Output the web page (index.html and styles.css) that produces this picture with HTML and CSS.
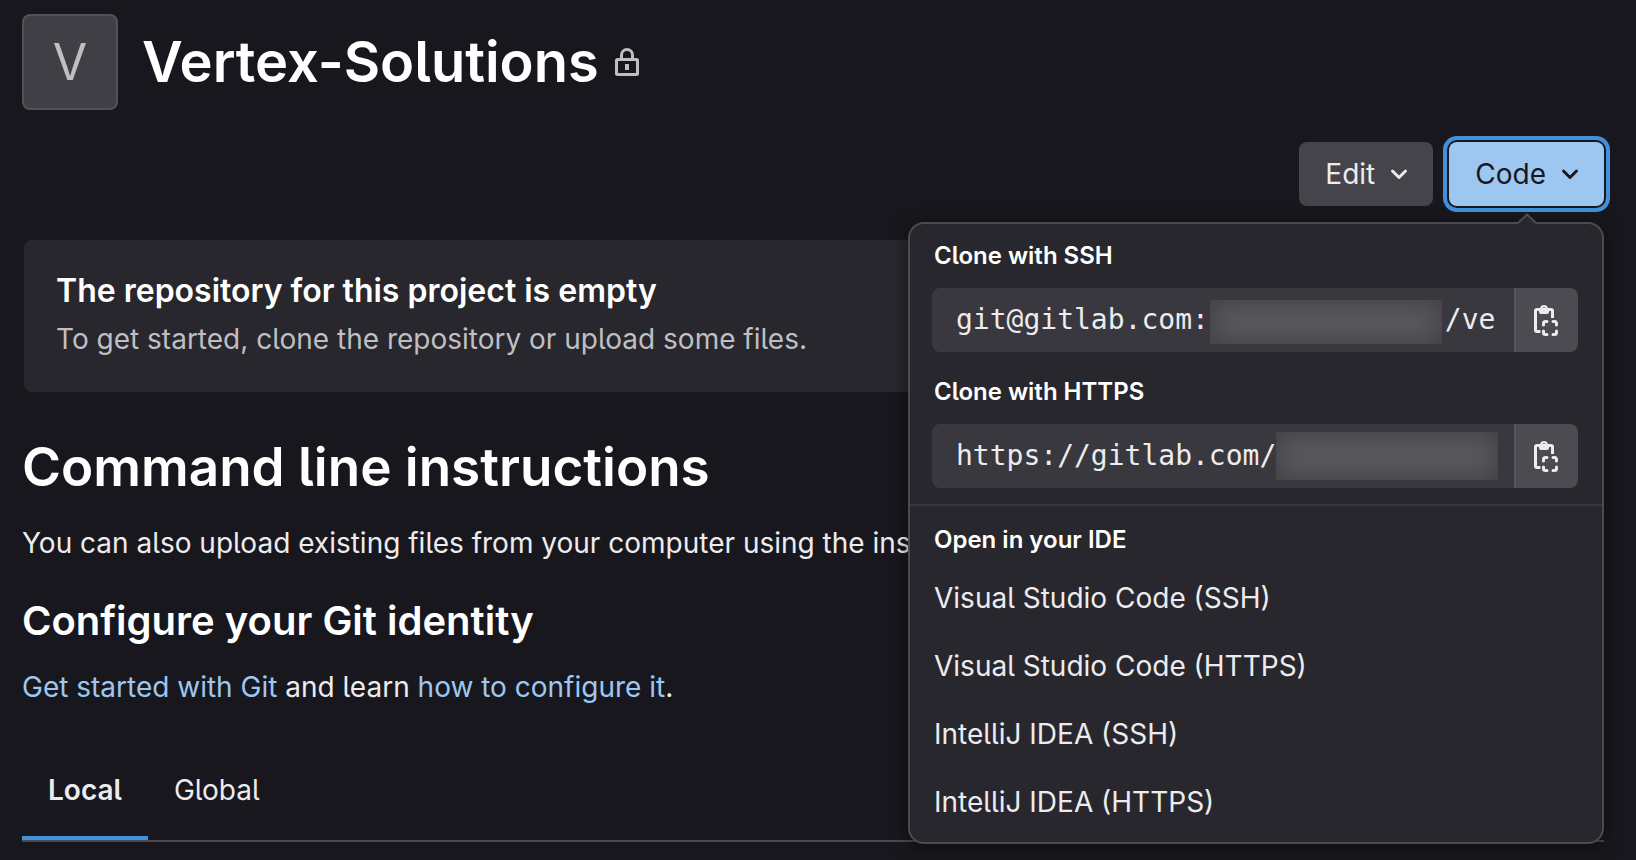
FILE: index.html
```html
<!DOCTYPE html>
<html lang="en">
<head>
<meta charset="utf-8">
<title>Vertex-Solutions</title>
<link rel="stylesheet" href="styles.css">
</head>
<body>
<svg class="sprite" aria-hidden="true">
  <symbol id="chevron" viewBox="0 0 20 20"><path d="M3.500 7 10 13.500 16.500 7" fill="none" stroke="currentColor" stroke-width="3" stroke-linecap="round" stroke-linejoin="round"/></symbol>
  <symbol id="copy" viewBox="0 0 24 32">
    <path d="M6.500 27.500H3A1.500 1.500 0 0 1 1.500 26V7A1.500 1.500 0 0 1 3 5.500h14A1.500 1.500 0 0 1 18.500 7v7" fill="none" stroke="currentColor" stroke-width="3"/>
    <path fill="currentColor" fill-rule="evenodd" d="M5 4h1a4.200 4.200 0 0 1 8 0h1v4a2 2 0 0 1-2 2H7a2 2 0 0 1-2-2zm5 3.200a2 2 0 1 0 0-4 2 2 0 0 0 0 4z"/>
    <path d="M9.500 21V19.500a2 2 0 0 1 2-2H13M19 17.500h1.500a2 2 0 0 1 2 2V21M22.500 27v1.500a2 2 0 0 1-2 2H19M13 30.500h-1.500a2 2 0 0 1-2-2V27" fill="none" stroke="currentColor" stroke-width="3" stroke-linecap="round"/>
  </symbol>
</svg>
<main class="page">
  <header class="project">
    <div class="avatar" aria-hidden="true">V</div>
    <h1 class="title">Vertex-Solutions</h1>
    <svg class="lock" viewBox="0 0 24 28" role="img" aria-label="Private"><path d="M6.500 11V7a5.500 5.500 0 0 1 11 0v4" fill="none" stroke="currentColor" stroke-width="3"/><rect x="1.500" y="11.500" width="21" height="15" rx="1" fill="none" stroke="currentColor" stroke-width="3"/><path d="M10 16h4v6h-4z" fill="currentColor"/></svg>
  </header>

  <div class="actions">
    <button class="btn" type="button">Edit <svg class="chevron"><use href="#chevron"/></svg></button>
    <div class="dropdown">
      <button class="btn btn-code" type="button" aria-expanded="true">Code <svg class="chevron"><use href="#chevron"/></svg></button>
      <div class="panel">
        <svg class="arrow" viewBox="0 0 20 12"><path class="arrow-fill" d="M0 12 10 1.500 20 12z"/><path class="arrow-line" d="M1 10 10 1.500 19 10"/></svg>
        <div class="clone">
          <label class="label" for="ssh">Clone with SSH</label>
          <div class="field">
            <input class="url" id="ssh" type="text" readonly value="git@gitlab.com:&nbsp;&nbsp;&nbsp;&nbsp;&nbsp;&nbsp;&nbsp;&nbsp;&nbsp;&nbsp;&nbsp;&nbsp;&nbsp;&nbsp;/ve">
            <span class="redacted redacted-ssh"></span>
            <button class="copy" type="button" aria-label="Copy SSH URL"><svg class="copy-icon"><use href="#copy"/></svg></button>
          </div>
          <label class="label" for="https">Clone with HTTPS</label>
          <div class="field">
            <input class="url" id="https" type="text" readonly value="https://gitlab.com/">
            <span class="redacted redacted-https"></span>
            <button class="copy" type="button" aria-label="Copy HTTPS URL"><svg class="copy-icon"><use href="#copy"/></svg></button>
          </div>
        </div>
        <div class="ide">
          <h2 class="label">Open in your IDE</h2>
          <a class="item" href="#">Visual Studio Code (SSH)</a>
          <a class="item" href="#">Visual Studio Code (HTTPS)</a>
          <a class="item" href="#">IntelliJ IDEA (SSH)</a>
          <a class="item" href="#">IntelliJ IDEA (HTTPS)</a>
        </div>
      </div>
    </div>
  </div>

  <section class="banner">
    <h2 class="banner-title">The repository for this project is empty</h2>
    <p class="banner-text">To get started, clone the repository or upload some files.</p>
  </section>

  <h2 class="heading">Command line instructions</h2>
  <p class="text">You can also upload existing files from your computer using the instructions below.</p>
  <h3 class="subheading">Configure your Git identity</h3>
  <p class="text"><a class="link" href="#">Get started with Git</a> and learn <a class="link" href="#">how to configure it</a>.</p>

  <div class="tabs" role="tablist">
    <button class="tab tab-active" type="button" role="tab" aria-selected="true">Local</button>
    <button class="tab" type="button" role="tab" aria-selected="false">Global</button>
  </div>
</main>
</body>
</html>
```
FILE: styles.css
```css
* { box-sizing: border-box; }

body {
  margin: 0;
  background: #18171d;
  color: #ececef;
  font: 400 28px/40px Inter, "Liberation Sans", sans-serif;
  font-feature-settings: "cv05";
}

h1, h2, h3, p { margin: 0; }
button, input { font: inherit; font-feature-settings: inherit; color: inherit; border: 0; margin: 0; }
a { color: inherit; text-decoration: none; }
.sprite { display: none; }

.page { padding: 14px 32px 16px 22px; }

.project { display: flex; align-items: center; }
.avatar {
  width: 96px;
  height: 96px;
  display: grid;
  place-items: center;
  background: #413f46;
  border: 2px solid #525157;
  border-radius: 8px;
  color: #bfbfc3;
  font-size: 50px;
}
.title { margin-left: 24px; font-size: 56px; line-height: 72px; font-weight: 600; color: #fff; }
.lock { width: 24px; height: 28px; margin-left: 16px; color: #bfbfc3; }

.actions { display: flex; justify-content: flex-end; gap: 16px; margin-top: 32px; }
.dropdown { position: relative; }
.btn {
  display: flex;
  align-items: center;
  gap: 14px;
  height: 64px;
  padding: 0 24px 0 26px;
  border-radius: 8px;
  background: #45444a;
}
.btn-code {
  background: #9dc7f1;
  color: #18171d;
  box-shadow: 0 0 0 2px #18171d, 0 0 0 6px #428fdc;
}
.chevron { width: 20px; height: 20px; }

.panel {
  position: absolute;
  z-index: 1;
  top: calc(100% + 16px);
  right: 0;
  width: 696px;
  background: #28272d;
  border: 2px solid #4c4b51;
  border-radius: 16px;
  box-shadow: 0 4px 16px rgba(5, 5, 6, 0.5);
}
.arrow { position: absolute; top: -11px; right: 65px; width: 20px; height: 12px; }
.arrow-fill { fill: #28272d; }
.arrow-line { fill: none; stroke: #4c4b51; stroke-width: 2; }

.clone { padding: 12px 24px 16px 22px; border-bottom: 2px solid #3a383f; }
.label {
  display: block;
  margin-left: 2px;
  font-size: 24px;
  line-height: 40px;
  font-weight: 600;
  color: #fff;
}
.field { position: relative; display: flex; height: 64px; margin-top: 12px; }
.field + .label { margin-top: 20px; }
.url {
  flex: 1;
  min-width: 0;
  padding: 0 16px 0 24px;
  border-radius: 8px 0 0 8px;
  background: #3a383f;
  font-family: "DejaVu Sans Mono", monospace;
}
.copy {
  width: 64px;
  display: grid;
  place-items: center;
  padding: 0 2px 0 0;
  background: #4c4b51;
  border-left: 2px solid #57565c;
  border-radius: 0 8px 8px 0;
}
.copy-icon { width: 24px; height: 32px; }

/* Hidden part of the address */
.redacted { position: absolute; background: #5a595e; box-shadow: inset 0 0 24px 4px #424147; }
.redacted-ssh { left: 278px; top: 12px; width: 232px; height: 44px; }
.redacted-https { left: 344px; top: 8px; width: 222px; height: 48px; }

.ide { padding: 14px 0 6px 22px; }
.item { display: block; margin-left: 2px; padding: 14px 0; }
.ide .label { margin-bottom: 4px; }

.banner {
  margin: 34px 2px 0;
  padding: 31px 32px 33px;
  background: #28272d;
  border-radius: 8px;
}
.banner-title { font-size: 32px; line-height: 40px; font-weight: 600; color: #fff; }
.banner-text { margin-top: 8px; color: #bfbfc3; }

.heading { margin-top: 39px; font-size: 53px; line-height: 72px; font-weight: 600; color: #fff; }
.text { margin-top: 20px; }
.subheading { margin-top: 34px; font-size: 40px; line-height: 48px; font-weight: 600; color: #fff; }
.subheading + .text { margin-top: 22px; }
.link { color: #9dc7f1; }

.tabs { display: flex; margin-top: 39px; border-bottom: 2px solid #4c4b51; }
.tab {
  padding: 24px 26px 26px;
  background: none;
  border-bottom: 4px solid transparent;
}
.tab-active { font-weight: 600; border-bottom-color: #428fdc; }
```
